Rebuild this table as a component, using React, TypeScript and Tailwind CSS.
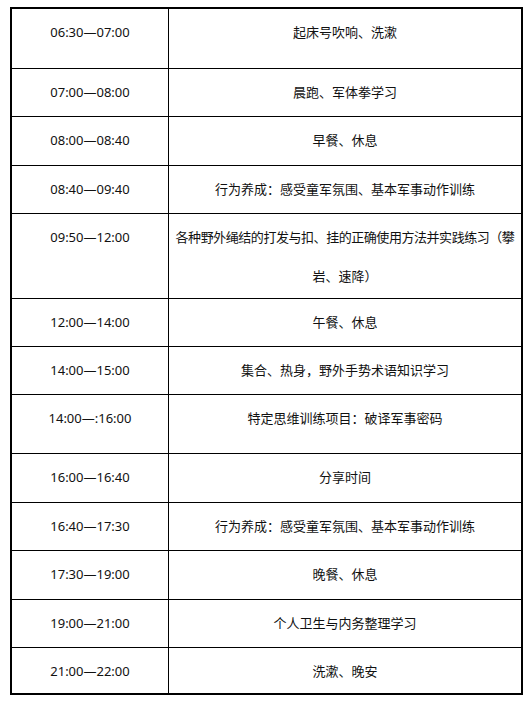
import React from "react";

type Row = { time: string; lines: string[]; h: string };

const rows: Row[] = [
  { time: "06:30—07:00", lines: ["起床号吹响、洗漱"], h: "h-[60px]" },
  { time: "07:00—08:00", lines: ["晨跑、军体拳学习"], h: "h-[48px]" },
  { time: "08:00—08:40", lines: ["早餐、休息"], h: "h-[49px]" },
  { time: "08:40—09:40", lines: ["行为养成：感受童军氛围、基本军事动作训练"], h: "h-[48px]" },
  {
    time: "09:50—12:00",
    lines: ["各种野外绳结的打发与扣、挂的正确使用方法并实践练习（攀", "岩、速降）"],
    h: "h-[85px]",
  },
  { time: "12:00—14:00", lines: ["午餐、休息"], h: "h-[48px]" },
  { time: "14:00—15:00", lines: ["集合、热身，野外手势术语知识学习"], h: "h-[48px]" },
  { time: "14:00—:16:00", lines: ["特定思维训练项目：破译军事密码"], h: "h-[59px]" },
  { time: "16:00—16:40", lines: ["分享时间"], h: "h-[49px]" },
  { time: "16:40—17:30", lines: ["行为养成：感受童军氛围、基本军事动作训练"], h: "h-[48px]" },
  { time: "17:30—19:00", lines: ["晚餐、休息"], h: "h-[49px]" },
  { time: "19:00—21:00", lines: ["个人卫生与内务整理学习"], h: "h-[48px]" },
  { time: "21:00—22:00", lines: ["洗漱、晚安"], h: "h-[45px]" },
];

export default function App() {
  return (
    <div className="w-[530px] h-[702px] bg-white pt-[7px] pl-[10px]">
      <div
        className="w-[513px] border-2 border-black text-[13px] leading-[39px] text-[#111]"
        style={{ fontFamily: '"Noto Sans", "Noto Sans CJK SC", sans-serif' }}
      >
        {rows.map((r, i) => {
          const last = i === rows.length - 1;
          return (
            <div
              key={i}
              className={`flex ${r.h} ${last ? "" : "border-b border-black"}`}
            >
              <div className="w-[157px] shrink-0 border-r border-black pt-[4px] text-center whitespace-nowrap">
                {r.time}
              </div>
              <div className="flex-1 pt-[4px] text-center">
                {r.lines.map((l, j) => (
                  <div
                    key={j}
                    className={`whitespace-nowrap ${r.lines.length > 1 && j === 0 ? "tracking-[-0.45px]" : ""}`}
                  >
                    {l}
                  </div>
                ))}
              </div>
            </div>
          );
        })}
      </div>
    </div>
  );
}
